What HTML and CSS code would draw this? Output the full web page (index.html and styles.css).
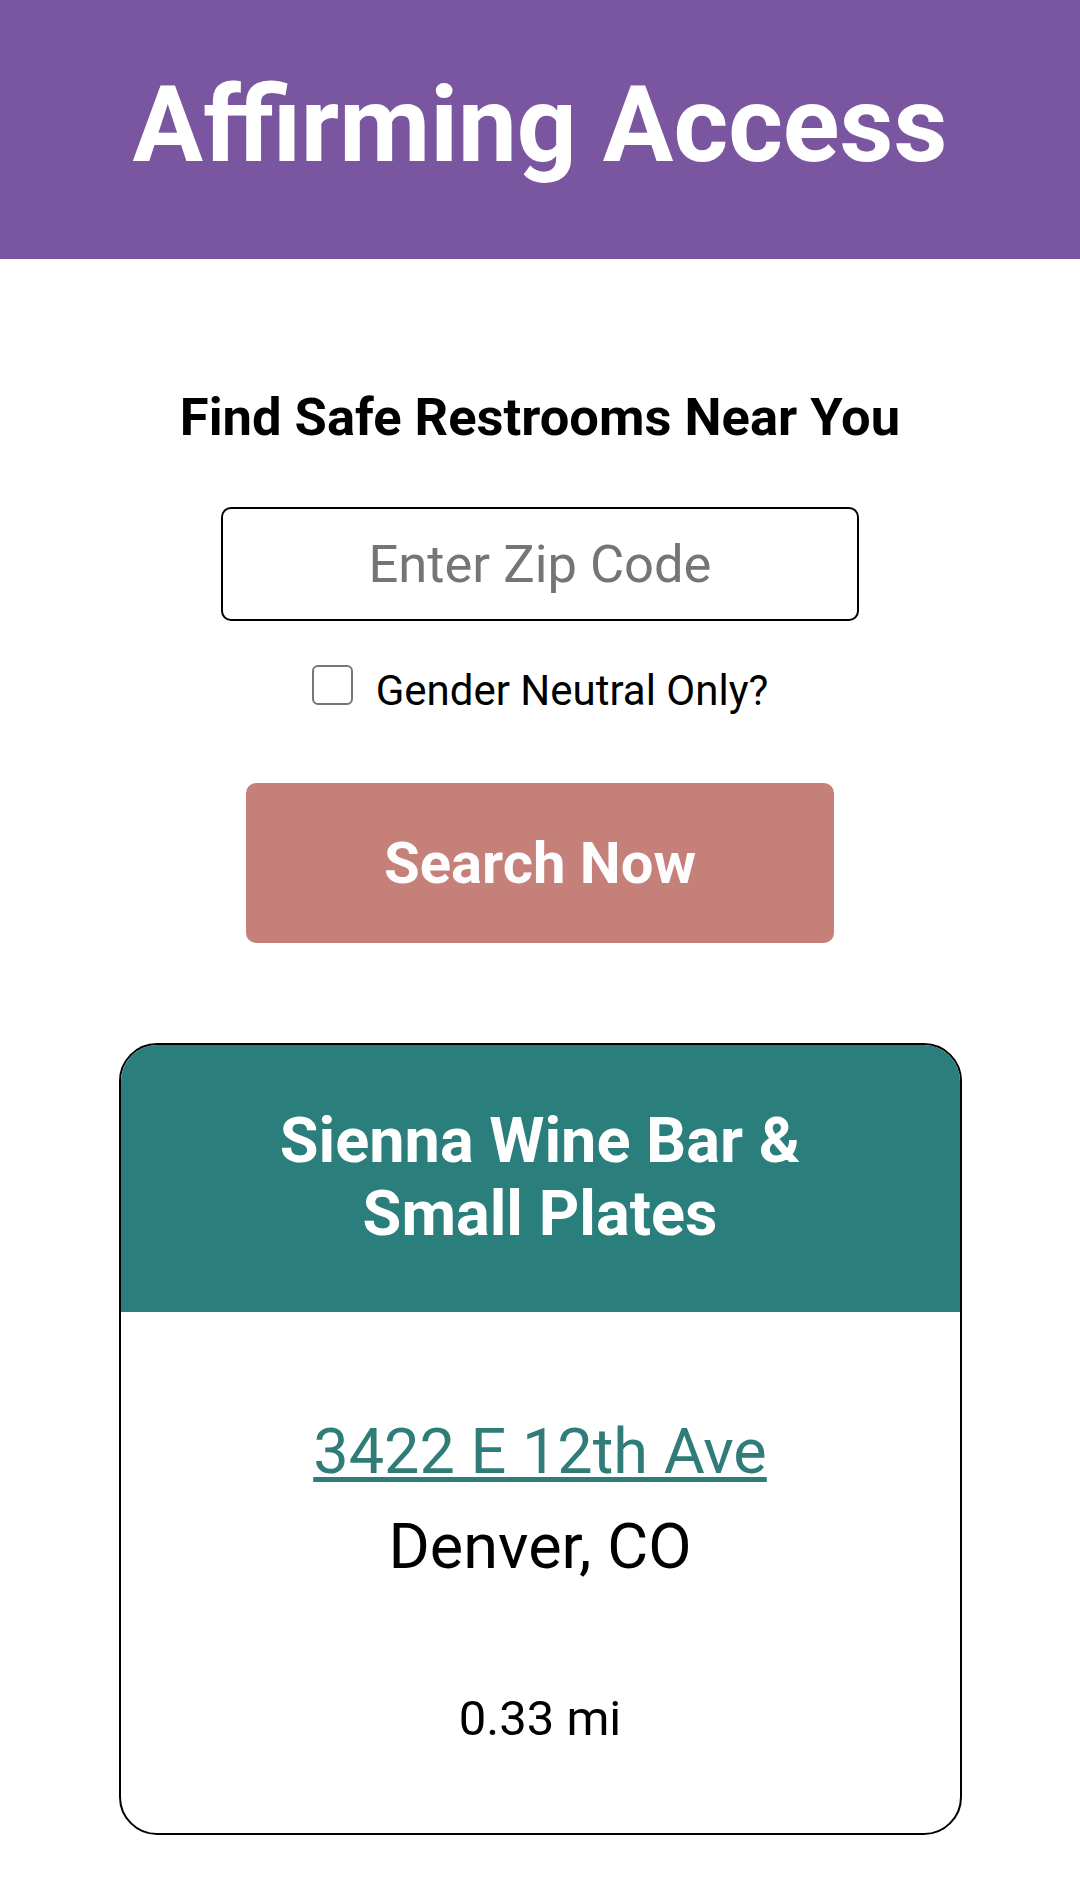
FILE: index.html
```html
<!DOCTYPE html>
<html lang="en">
<head>
<meta charset="utf-8">
<title>Affirming Access</title>
<link rel="stylesheet" href="styles.css">
</head>
<body>
<header class="site-header">
  <h1 class="site-title">Affirming Access</h1>
</header>
<main class="search">
  <h2 class="search-heading">Find Safe Restrooms Near You</h2>
  <input class="zip-input" type="text" placeholder="Enter Zip Code">
  <label class="neutral-row">
    <input class="neutral-check" type="checkbox">
    <span class="neutral-label">Gender Neutral Only?</span>
  </label>
  <button class="search-btn" type="button">Search Now</button>
  <section class="result-card">
    <div class="result-head">
      <h3 class="result-name">Sienna Wine Bar &amp; Small Plates</h3>
    </div>
    <div class="result-body">
      <a class="result-address" href="#">3422 E 12th Ave</a>
      <div class="result-city">Denver, CO</div>
      <div class="result-distance">0.33 mi</div>
    </div>
  </section>
</main>
</body>
</html>
```
FILE: styles.css
```css
* { box-sizing: border-box; }
html, body {
  margin: 0;
  padding: 0;
  background: #ffffff;
  font-family: Roboto, "Noto Sans", "Liberation Sans", sans-serif;
  color: #000;
}
.site-header {
  background: #7b56a0;
  height: 259px;
  padding-top: 63px;
  text-align: center;
}
.site-title {
  margin: 0;
  color: #fff;
  font-weight: 700;
  font-size: 105px;
  line-height: 126px;
}
.search {
  display: flex;
  flex-direction: column;
  align-items: center;
  padding-top: 126px;
  padding-bottom: 40px;
}
.search-heading {
  margin: 0;
  font-size: 52.5px;
  font-weight: 700;
  line-height: 64px;
  color: #000;
}
.zip-input {
  margin-top: 58px;
  width: 638px;
  height: 114px;
  border: 2px solid #000;
  border-radius: 10px;
  font-family: Roboto, "Noto Sans", sans-serif;
  font-size: 52.5px;
  text-align: center;
  padding: 0 10px;
  color: #000;
  background: #fff;
  outline: none;
}
.zip-input::placeholder { color: #757575; opacity: 1; }
.neutral-row {
  margin-top: 44px;
  display: flex;
  align-items: flex-start;
  gap: 23px;
}
.neutral-check {
  appearance: none;
  -webkit-appearance: none;
  margin: 0;
  width: 41px;
  height: 40px;
  border: 2.5px solid #767676;
  border-radius: 6px;
  background: #fff;
}
.neutral-label {
  margin-top: 1px;
  font-size: 42px;
  line-height: 49px;
  color: #000;
}
.search-btn {
  margin-top: 68px;
  width: 588px;
  height: 160px;
  border: none;
  border-radius: 10px;
  background: #c5807a;
  color: #fdfdfd;
  font-family: Roboto, "Noto Sans", sans-serif;
  font-weight: 700;
  font-size: 58px;
  padding: 0;
}
.result-card {
  margin-top: 100px;
  width: 843px;
  border: 2px solid #000;
  border-radius: 38px;
  overflow: hidden;
  text-align: center;
}
.result-head {
  background: #2a7e7b;
  height: 267px;
  padding: 59px 120px 0;
}
.result-name {
  margin: 0;
  color: #fff;
  font-weight: 700;
  font-size: 63px;
  line-height: 73px;
}
.result-body {
  display: flex;
  flex-direction: column;
  align-items: center;
  padding: 103px 20px 86px;
}
.result-address {
  color: #2f7c78;
  font-size: 63px;
  line-height: normal;
  text-decoration: underline;
  text-decoration-thickness: 5px;
  text-underline-offset: 4px;
}
.result-city {
  margin-top: 22px;
  font-size: 63px;
  line-height: normal;
  color: #000;
}
.result-distance {
  margin-top: 107px;
  font-size: 49px;
  line-height: normal;
  color: #000;
}
```
